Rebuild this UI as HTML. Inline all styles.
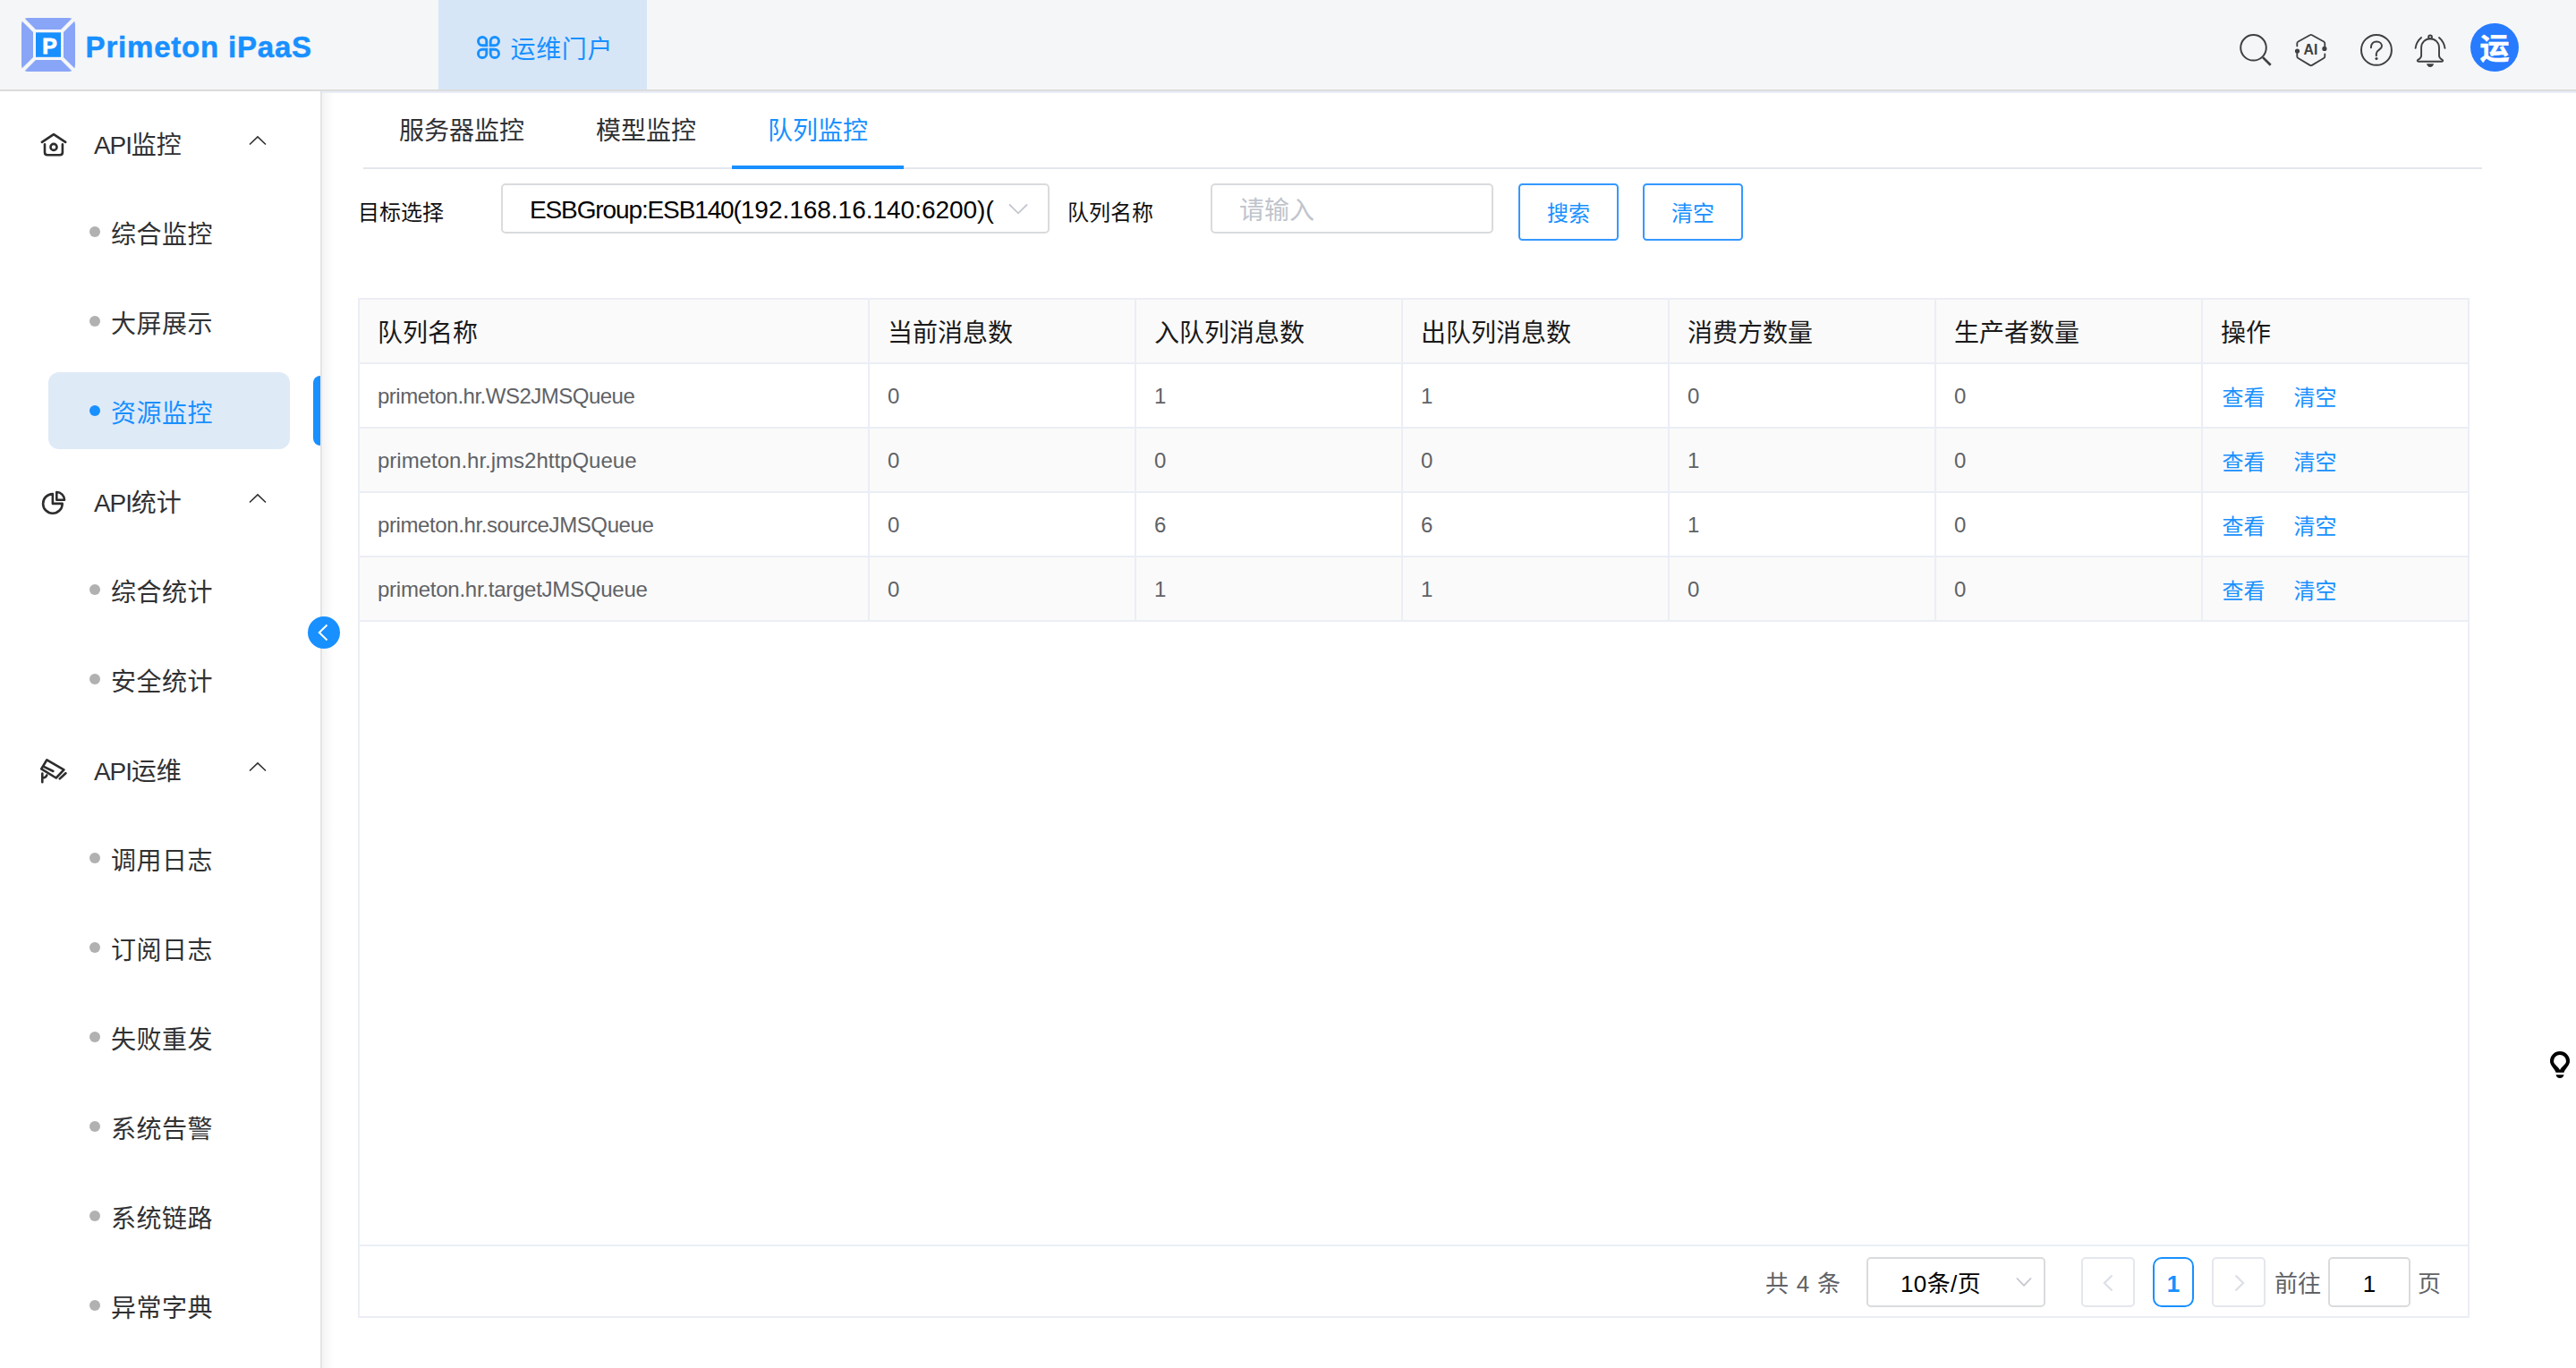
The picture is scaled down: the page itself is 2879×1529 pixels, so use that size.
<!DOCTYPE html>
<html lang="zh-CN">
<head>
<meta charset="utf-8">
<title>Primeton iPaaS</title>
<style>
*{box-sizing:border-box;margin:0;padding:0}
html,body{width:2879px;height:1529px;overflow:hidden;background:#fff}
body{font-family:"Liberation Sans","Noto Sans CJK SC",sans-serif;color:#303133;position:relative}
.abs{position:absolute}
/* header */
#header{position:absolute;left:0;top:0;width:2879px;height:100px;background:#f5f6f8}
#hline{position:absolute;left:0;top:100px;width:2879px;height:2px;background:#dcdcdc}
#hline2{position:absolute;left:360px;top:102px;width:2519px;height:2px;background:#e9edf7}
#logo{position:absolute;left:24px;top:20px;width:60px;height:60px}
#brand{position:absolute;left:95.6px;top:33px;font-size:33px;line-height:40px;font-weight:bold;color:#1890ff;letter-spacing:0.8px;-webkit-text-stroke:0.5px #1890ff;white-space:nowrap}
#navtab{position:absolute;left:490px;top:0;width:233px;height:100px;background:#d6e6f7}
#navtab svg{position:absolute;left:43px;top:40px}
#navtab span{position:absolute;left:80.5px;top:36px;font-size:28px;line-height:40px;color:#1890ff;white-space:nowrap;letter-spacing:0.65px}
/* sidebar */
#side{position:absolute;left:0;top:102px;width:358px;height:1427px;background:#fff}
#sideline{position:absolute;left:358px;top:102px;width:2px;height:1427px;background:#e4e4e6}
#sideshadow{position:absolute;left:360px;top:104px;width:13px;height:1425px;background:linear-gradient(90deg,#f4f4f4,#fff)}
.m1{position:absolute;left:0;width:358px;height:100px}

.m1 .t{position:absolute;left:105px;top:32px;font-size:28px;line-height:40px;color:#303133;white-space:nowrap}
.m1 svg.ic{position:absolute;left:45px;top:36px}
.m1 svg.ch{position:absolute;left:278px;top:40px}
.m2{position:absolute;left:0;width:358px;height:100px}
.m2 i{position:absolute;left:100px;top:42px;width:12px;height:12px;border-radius:50%;background:#b1b1b1}
.m2 .t{position:absolute;left:124px;top:32px;font-size:28px;line-height:40px;color:#303133;white-space:nowrap;letter-spacing:0.5px}
#actbg{position:absolute;left:54px;top:416px;width:270px;height:86px;border-radius:12px;background:#dfeaf7}
#actbar{position:absolute;left:350px;top:420px;width:8px;height:78px;border-radius:8px 0 0 8px;background:#1890ff}
.m2.act i{background:#1890ff}
.m2.act .t{color:#1890ff}
#collapse{position:absolute;left:344px;top:689px;width:36px;height:36px;border-radius:50%;background:#1890ff}
/* tabs */
#tabline{position:absolute;left:406px;top:187px;width:2368px;height:2px;background:#e4e7ed}
#tabact{position:absolute;left:818px;top:185px;width:192px;height:4px;background:#1890ff}
.tab{position:absolute;top:127px;font-size:28px;line-height:40px;color:#303133;white-space:nowrap}
/* filter */
.lbl{position:absolute;top:222px;font-size:24px;line-height:32px;color:#111;white-space:nowrap}
.inp{position:absolute;top:205px;height:56px;border:2px solid #d9dbdd;border-radius:5px;background:#fff}
.btn{position:absolute;top:205px;width:112px;height:64px;border:2px solid #3398ff;border-radius:4.5px;background:#fff;color:#1890ff;font-size:24px;line-height:60px;text-align:center;padding-top:2px}
/* table */
#tbox{position:absolute;left:400px;top:333px;width:2360px;height:1140px;border:2px solid #ebeef5}
.row{position:absolute;left:402px;width:2356px;height:72px;border-bottom:2px solid #ebeef5}
.row.head{background:#fafafa}
.row.str{background:#fafafa}
.c{position:absolute;top:0;height:70px;border-right:2px solid #ebeef5;padding-left:20px;font-size:24px;line-height:71px;color:#606266;white-space:nowrap}
.head .c{font-size:28px;color:#1a1a1a;line-height:75px}
.c.f{padding-left:20px}
.c a{color:#1890ff;text-decoration:none;position:relative;top:2px;margin-right:32px;margin-left:1.4px}
.c a+a{margin-left:0}
/* pagination */
#pgline{position:absolute;left:402px;top:1391px;width:2356px;height:2px;background:#ebeef5}
.pg{position:absolute;top:1405px;height:56px;font-size:26px;line-height:60px;color:#606266;white-space:nowrap}
.pbox{border:2px solid #d9dbdd;border-radius:5px;line-height:56px;text-align:center;color:#000}
</style>
</head>
<body>
<div id="header"></div>
<div id="hline"></div><div id="hline2"></div>
<svg id="logo" viewBox="0 0 60 60">
  <rect x="0" y="0" width="60" height="60" rx="7" fill="#89a5f7"/>
  <path d="M0 0L60 60M60 0L0 60" stroke="#f5f6f8" stroke-width="4.2"/>
  <rect x="13" y="13" width="34" height="34" fill="#f5f6f8"/>
  <rect x="16" y="16.3" width="28" height="27.5" fill="#1890ff"/>
  <text x="31.6" y="40.1" font-family="Liberation Sans, sans-serif" font-weight="bold" font-size="24.700" fill="#fff" stroke="#fff" stroke-width="0.9" text-anchor="middle">P</text>
</svg>
<div id="brand">Primeton iPaaS</div>
<div id="navtab">
  <svg width="26" height="26" viewBox="0 0 27 27" fill="none" stroke="#1890ff" stroke-width="3" stroke-linejoin="miter">
    <path d="M11.2 11.2H6.35A4.85 4.85 0 1 1 11.2 6.35Z"/>
    <path d="M15.8 11.2H20.65A4.85 4.85 0 1 0 15.8 6.35Z"/>
    <path d="M11.2 15.8H6.35A4.85 4.85 0 1 0 11.2 20.65Z"/>
    <path d="M15.8 15.8H20.65A4.85 4.85 0 1 1 15.8 20.65Z"/>
  </svg>
  <span>运维门户</span>
</div>
<!-- header right icons -->
<svg class="abs" style="left:2502px;top:37px" width="38" height="38" viewBox="0 0 38 38" fill="none" stroke="#404040" stroke-width="2">
  <circle cx="16.5" cy="16.3" r="14.3"/><path d="M27 27.100L35.7 35.8" stroke-width="2.7"/>
</svg>
<svg class="abs" style="left:2564px;top:37px" width="38" height="38" viewBox="0 0 38 38" fill="none" stroke="#404040" stroke-width="1.85" stroke-linejoin="round" stroke-linecap="round">
  <path d="M3.3 14.400V11.600Q3.300 10.200 4.500 9.500L17.600 2.200Q18.800 1.500 20 2.200L33.100 9.500Q34.300 10.200 34.300 11.600V14.500"/>
  <path d="M34.300 23.400V25.900Q34.300 27.300 33.100 28L20 35.900Q18.800 36.600 17.600 35.900L4.500 28Q3.300 27.300 3.300 25.900V22.600"/>
  <circle cx="3.500" cy="20.100" r="2.600" fill="#404040" stroke="none"/><circle cx="33.900" cy="17.400" r="2.600" fill="#404040" stroke="none"/>
  <text x="18.500" y="23.800" font-family="Liberation Sans, sans-serif" font-weight="bold" font-size="15.800" fill="#404040" stroke="none" text-anchor="middle">AI</text>
</svg>
<svg class="abs" style="left:2637px;top:37px" width="38" height="38" viewBox="0 0 38 38" fill="none" stroke="#404040" stroke-width="2" stroke-linecap="round">
  <circle cx="18.960" cy="18.900" r="16.950"/>
  <path d="M12.900 16.200C12.900 12 15.500 9.500 19.200 9.500C22.600 9.500 25 11.600 25 14.400C25 18.600 18.800 18.600 18.800 23V25.300"/>
  <circle cx="19" cy="28.500" r="1.600" fill="#404040" stroke="none"/>
</svg>
<svg class="abs" style="left:2697px;top:37px" width="38" height="40" viewBox="0 0 38 40" fill="none" stroke="#404040" stroke-width="1.9" stroke-linecap="round" stroke-linejoin="round">
  <path d="M9.100 25.200V16.200A9.950 9.950 0 0 1 29 16.200V25.200C29 27.500 30.500 28.600 32.500 29.800C33.800 30.600 33.300 31.700 32 31.700H6C4.700 31.700 4.200 30.600 5.500 29.800C7.500 28.600 9.100 27.500 9.100 25.200Z"/>
  <circle cx="19.050" cy="4.400" r="1.900"/>
  <path d="M15 34.200H23.100C22.600 36.600 21 37.900 19.050 37.900C17.100 37.900 15.500 36.600 15 34.200Z" fill="#404040" stroke="none"/>
  <path d="M9.100 5Q3.600 9.600 2.600 16.800"/><path d="M29 5Q34.400 9.600 35.500 16.800"/>
</svg>
<div class="abs" style="left:2761px;top:26px;width:54px;height:54px;border-radius:50%;background:#267bff;color:#fff;font-weight:bold;font-size:33px;line-height:58px;text-align:center;-webkit-text-stroke:0.5px #fff">运</div>

<!-- sidebar -->
<div id="side"></div>
<div id="sideline"></div>
<div id="sideshadow"></div>
<div id="actbg"></div>
<div id="actbar"></div>

<div class="m1" style="top:111px">
  <svg class="ic" width="30" height="30" viewBox="0 0 30 30" fill="none" stroke="#2d2d2f" stroke-width="2.6" stroke-linecap="round" stroke-linejoin="round">
    <path d="M1.9 11.9L15 3.2L28.2 11.9"/><path d="M5 14.4V23.2Q5 26.3 8.1 26.3H21.8Q24.9 26.3 24.9 23.2V14.4"/><circle cx="15" cy="17.4" r="3.5"/>
  </svg>
  <span class="t"><span style="letter-spacing:-1.1px">API</span>监控</span>
  <svg class="ch" width="20" height="12" viewBox="0 0 20 12" fill="none" stroke="#303133" stroke-width="1.6"><path d="M1 10.5L10 1.8L19 10.5"/></svg>
</div>
<div class="m2" style="top:211px"><i></i><span class="t">综合监控</span></div>
<div class="m2" style="top:311px"><i></i><span class="t">大屏展示</span></div>
<div class="m2 act" style="top:411px"><i></i><span class="t">资源监控</span></div>
<div class="m1" style="top:511px">
  <svg class="ic" width="30" height="30" viewBox="0 0 30 30" fill="none" stroke="#2d2d2f" stroke-width="2.6" stroke-linecap="round" stroke-linejoin="round">
    <path d="M13.9 5.1A10.8 10.8 0 1 0 24.7 15.9H13.9Z"/><path d="M18.3 3A8.7 8.7 0 0 1 27 11.7H18.300Z"/>
  </svg>
  <span class="t"><span style="letter-spacing:-1.1px">API</span>统计</span>
  <svg class="ch" width="20" height="12" viewBox="0 0 20 12" fill="none" stroke="#303133" stroke-width="1.6"><path d="M1 10.5L10 1.8L19 10.5"/></svg>
</div>
<div class="m2" style="top:611px"><i></i><span class="t">综合统计</span></div>
<div class="m2" style="top:711px"><i></i><span class="t">安全统计</span></div>
<div class="m1" style="top:811px">
  <svg class="ic" width="30" height="30" viewBox="0 0 30 30" fill="none" stroke="#2d2d2f" stroke-width="2.6" stroke-linecap="round" stroke-linejoin="round">
    <path d="M7.4 2.3L26.4 13.3L17.7 22.5L1.2 12.4Z"/><path d="M3.9 9.8L14.4 15"/><path d="M28.4 17.2L21.8 23.4"/><path d="M2.3 17.6V27.300M2.3 22.5Q6.2 22.500 7.4 19.4"/>
  </svg>
  <span class="t"><span style="letter-spacing:-1.1px">API</span>运维</span>
  <svg class="ch" width="20" height="12" viewBox="0 0 20 12" fill="none" stroke="#303133" stroke-width="1.6"><path d="M1 10.5L10 1.8L19 10.5"/></svg>
</div>
<div class="m2" style="top:911px"><i></i><span class="t">调用日志</span></div>
<div class="m2" style="top:1011px"><i></i><span class="t">订阅日志</span></div>
<div class="m2" style="top:1111px"><i></i><span class="t">失败重发</span></div>
<div class="m2" style="top:1211px"><i></i><span class="t">系统告警</span></div>
<div class="m2" style="top:1311px"><i></i><span class="t">系统链路</span></div>
<div class="m2" style="top:1411px"><i></i><span class="t">异常字典</span></div>

<div id="collapse"><svg width="36" height="36" viewBox="0 0 36 36" fill="none" stroke="#fff" stroke-width="2"><path d="M21.500 9.500L12.800 18L21.500 26.500"/></svg></div>

<!-- tabs -->
<div id="tabline"></div><div id="tabact"></div>
<div class="tab" style="left:446px">服务器监控</div>
<div class="tab" style="left:666px">模型监控</div>
<div class="tab" style="left:858px;color:#1890ff">队列监控</div>

<!-- filter -->
<div class="lbl" style="left:400px">目标选择</div>
<div class="inp" style="left:560px;width:613px"><span class="abs" style="left:30px;top:7.700px;font-size:28px;line-height:40px;color:#000;white-space:nowrap"><span style="letter-spacing:-1.12px">ESBGroup:ESB140(</span><span style="letter-spacing:-0.02px">192.168.16.140:6200)(</span></span>
  <svg class="abs" style="left:565px;top:20px" width="22" height="13" viewBox="0 0 22 13" fill="none" stroke="#c3c7cf" stroke-width="1.8"><path d="M1 1.500L11 11.300L21 1.500"/></svg>
</div>
<div class="lbl" style="left:1193px">队列名称</div>
<div class="inp" style="left:1353px;width:316px"><span class="abs" style="left:30px;top:9px;font-size:28px;line-height:40px;color:#c0c4cc;white-space:nowrap">请输入</span></div>
<div class="btn" style="left:1697px">搜索</div>
<div class="btn" style="left:1836px">清空</div>

<!-- table -->
<div id="tbox"></div>
<div class="row head" style="top:335px">
  <div class="c f" style="left:0;width:570px">队列名称</div>
  <div class="c" style="left:570px;width:298px">当前消息数</div>
  <div class="c" style="left:868px;width:298px">入队列消息数</div>
  <div class="c" style="left:1166px;width:298px">出队列消息数</div>
  <div class="c" style="left:1464px;width:298px">消费方数量</div>
  <div class="c" style="left:1762px;width:298px">生产者数量</div>
  <div class="c" style="left:2060px;width:296px;border-right:0">操作</div>
</div>
<div class="row" style="top:407px">
  <div class="c f" style="left:0;width:570px;letter-spacing:-0.5px">primeton.hr.WS2JMSQueue</div>
  <div class="c" style="left:570px;width:298px">0</div>
  <div class="c" style="left:868px;width:298px">1</div>
  <div class="c" style="left:1166px;width:298px">1</div>
  <div class="c" style="left:1464px;width:298px">0</div>
  <div class="c" style="left:1762px;width:298px">0</div>
  <div class="c" style="left:2060px;width:296px;border-right:0"><a>查看</a><a>清空</a></div>
</div>
<div class="row str" style="top:479px">
  <div class="c f" style="left:0;width:570px">primeton.hr.jms2httpQueue</div>
  <div class="c" style="left:570px;width:298px">0</div>
  <div class="c" style="left:868px;width:298px">0</div>
  <div class="c" style="left:1166px;width:298px">0</div>
  <div class="c" style="left:1464px;width:298px">1</div>
  <div class="c" style="left:1762px;width:298px">0</div>
  <div class="c" style="left:2060px;width:296px;border-right:0"><a>查看</a><a>清空</a></div>
</div>
<div class="row" style="top:551px">
  <div class="c f" style="left:0;width:570px;letter-spacing:-0.4px">primeton.hr.sourceJMSQueue</div>
  <div class="c" style="left:570px;width:298px">0</div>
  <div class="c" style="left:868px;width:298px">6</div>
  <div class="c" style="left:1166px;width:298px">6</div>
  <div class="c" style="left:1464px;width:298px">1</div>
  <div class="c" style="left:1762px;width:298px">0</div>
  <div class="c" style="left:2060px;width:296px;border-right:0"><a>查看</a><a>清空</a></div>
</div>
<div class="row str" style="top:623px">
  <div class="c f" style="left:0;width:570px;letter-spacing:-0.25px">primeton.hr.targetJMSQueue</div>
  <div class="c" style="left:570px;width:298px">0</div>
  <div class="c" style="left:868px;width:298px">1</div>
  <div class="c" style="left:1166px;width:298px">1</div>
  <div class="c" style="left:1464px;width:298px">0</div>
  <div class="c" style="left:1762px;width:298px">0</div>
  <div class="c" style="left:2060px;width:296px;border-right:0"><a>查看</a><a>清空</a></div>
</div>

<!-- pagination -->
<div id="pgline"></div>
<div class="pg" style="left:1973px;word-spacing:1.5px">共 4 条</div>
<div class="pg pbox" style="left:2086px;width:200px;text-align:left;padding-left:36px;letter-spacing:0.4px">10条/页
  <svg class="abs" style="left:165px;top:20px" width="18" height="12" viewBox="0 0 18 12" fill="none" stroke="#c0c4cc" stroke-width="1.7"><path d="M1 1.5L9 9.800L17 1.5"/></svg>
</div>
<div class="pg pbox" style="left:2326px;width:60px;border-color:#e4e7ed"><svg class="abs" style="left:20px;top:16px" width="16" height="22" viewBox="0 0 16 22" fill="none" stroke="#dde0e7" stroke-width="2.4"><path d="M12.5 2.5L4 11L12.500 19.5"/></svg></div>
<div class="pg pbox" style="left:2406px;width:46px;border-color:#1890ff;border-radius:10px;color:#1890ff;font-weight:bold">1</div>
<div class="pg pbox" style="left:2472px;width:60px;border-color:#e4e7ed"><svg class="abs" style="left:21px;top:16px" width="16" height="22" viewBox="0 0 16 22" fill="none" stroke="#dde0e7" stroke-width="2.4"><path d="M3.5 2.5L12 11L3.500 19.5"/></svg></div>
<div class="pg" style="left:2542px">前往</div>
<div class="pg pbox" style="left:2602px;width:92px">1</div>
<div class="pg" style="left:2702px">页</div>

<!-- lightbulb -->
<svg class="abs" style="left:2849px;top:1174px" width="24" height="32" viewBox="0 0 24 32">
  <path fill="#000" fill-rule="evenodd" d="M12 1A11 11 0 0 1 23 12C23 17 18.500 19.500 16.500 24.700H7.500C5.500 19.500 1 17 1 12A11 11 0 0 1 12 1ZM12 5A7 7 0 0 1 19 12C19 15.500 14.500 17.500 12.300 21.500H11.700C9.500 17.500 5 15.500 5 12A7 7 0 0 1 12 5Z"/>
  <path fill="#000" d="M7.500 27.300H16.500C16 29.500 14.500 31 12 31C9.500 31 8 29.500 7.500 27.300Z"/>
</svg>
</body>
</html>
